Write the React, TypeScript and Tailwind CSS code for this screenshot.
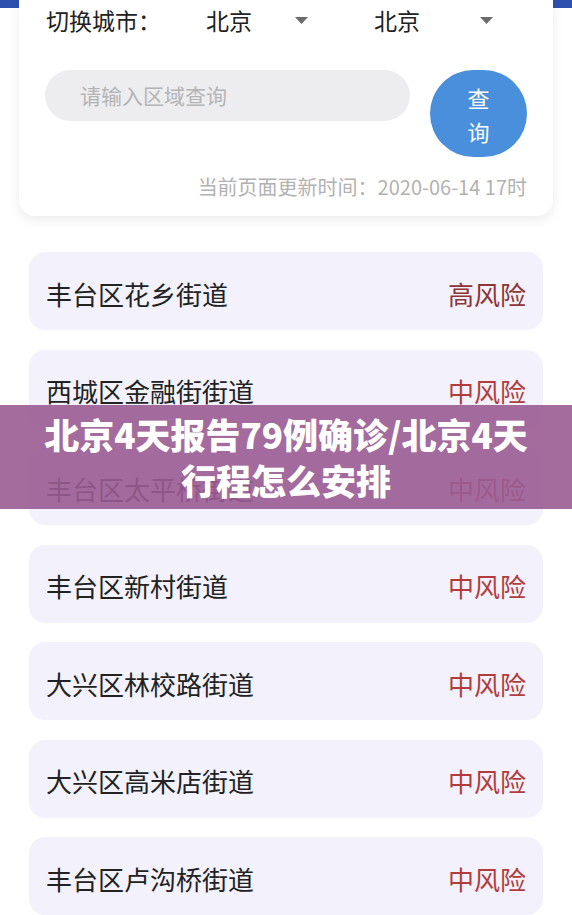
import React from "react";

const rows = [
  { name: "丰台区花乡街道", risk: "高风险" },
  { name: "西城区金融街街道", risk: "中风险" },
  { name: "丰台区太平桥街道", risk: "中风险" },
  { name: "丰台区新村街道", risk: "中风险" },
  { name: "大兴区林校路街道", risk: "中风险" },
  { name: "大兴区高米店街道", risk: "中风险" },
  { name: "丰台区卢沟桥街道", risk: "中风险" },
];

const Caret = () => (
  <svg width="13" height="7" viewBox="0 0 13 7" className="shrink-0">
    <path d="M0 0 L13 0 L6.5 7 Z" fill="#6b6b6b" />
  </svg>
);

const RiskRow = ({ name, risk }: { name: string; risk: string }) => {
  return (
    <div className="flex h-[78px] items-center justify-between rounded-2xl bg-[#f3f2fc] pl-[17px] pr-[17px] pt-[4px]">
      <span className="text-[26px] text-[#222222]">{name}</span>
      <span
        className={
          risk === "高风险"
            ? "text-[26px] text-[#8e3434]"
            : "text-[26px] text-[#b23c3c]"
        }
      >
        {risk}
      </span>
    </div>
  );
};

export default function App() {
  return (
    <div
      className="relative min-h-[915px] w-[572px] overflow-hidden bg-white"
      style={{ fontFamily: '"Noto Sans CJK SC", "Noto Sans", sans-serif' }}
    >
      <div className="h-[8px] w-full bg-[#2d4fae]" />
      <div className="mx-[19px] -mt-[8px] rounded-b-2xl bg-white px-[26px] pb-[18px] shadow-[0_4px_12px_rgba(0,0,0,0.08)]">
        <div className="flex h-[40px] items-center text-[23px] leading-[30px] text-[#222222]">
          <span className="w-[161px] pl-px">切换城市：</span>
          <div className="flex w-[168px] items-center">
            <span>北京</span>
            <span className="ml-[43px]">
              <Caret />
            </span>
          </div>
          <div className="flex items-center">
            <span>北京</span>
            <span className="ml-[60px]">
              <Caret />
            </span>
          </div>
        </div>
        <div className="mt-[30px] flex items-start justify-between">
          <div className="flex h-[51px] w-[365px] items-center rounded-full bg-[#ededf0] pl-[35px] text-[21px] text-[#b4b4b4]">
            请输入区域查询
          </div>
          <div className="flex h-[87px] w-[97px] flex-col items-center justify-center rounded-full bg-[#4a8fdb] text-[22px] leading-[34px] text-white">
            <span>查</span>
            <span>询</span>
          </div>
        </div>
        <div className="mt-[19px] text-right text-[20px] leading-[22px] text-[#b2b2b2]">
          当前页面更新时间：2020-06-14 17时
        </div>
      </div>

      <div className="mt-[36px] flex flex-col gap-[19.5px] px-[29px] pb-[20px]">
        {rows.map((r) => (
          <RiskRow key={r.name} name={r.name} risk={r.risk} />
        ))}
      </div>

      <div className="absolute left-0 top-[405px] flex h-[104px] w-full flex-col items-center justify-center bg-[#9a5c92]/90 text-center text-[35px] font-black leading-[46px] text-white">
        <span>北京4天报告79例确诊/北京4天</span>
        <span>行程怎么安排</span>
      </div>
    </div>
  );
}
